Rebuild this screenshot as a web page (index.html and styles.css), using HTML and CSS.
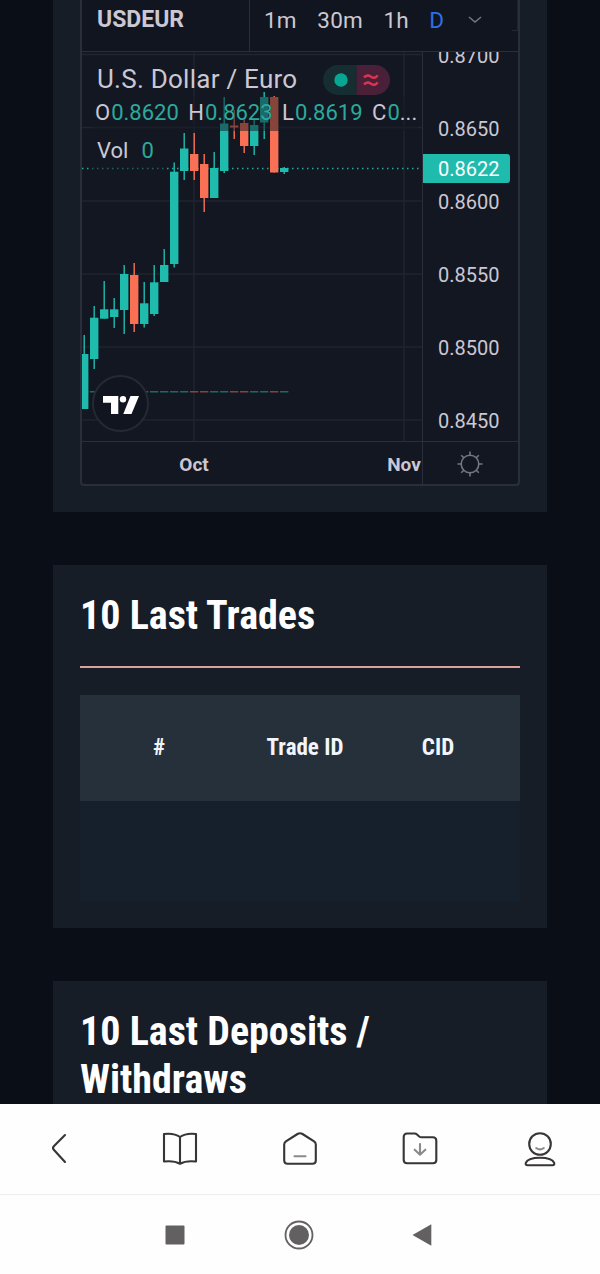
FILE: index.html
```html
<!DOCTYPE html>
<html lang="en">
<head>
    <meta charset="UTF-8">
    <meta name="viewport" content="width=device-width, initial-scale=1.0">
    <title>USDEUR</title>
    <link rel="stylesheet" href="styles.css">
</head>
<body>
    <main class="page">
        <section class="card chart-card">
            <div class="widget">
                <div class="toolbar">
                    <div class="symbol">USDEUR</div>
                    <div class="intervals">
                        <span class="interval">1m</span>
                        <span class="interval">30m</span>
                        <span class="interval">1h</span>
                        <span class="interval active">D</span>
                        <svg class="chevron" width="14" height="8" viewBox="0 0 14 8"><path d="M1 1l6 5 6-5"/></svg>
                    </div>
                    <span class="tool-edge"></span>
                </div>
                <div class="chart">
                    <div class="plot">
                        <svg id="candles" class="candles" width="341" height="389" viewBox="82 52 341 389"></svg>
                        <div class="legend">
                            <div class="legend-title">
                                <span class="pair">U.S. Dollar / Euro</span>
                                <span class="status">
                                    <svg width="67" height="30" viewBox="0 0 67 30">
                                        <path class="pill-open" d="M33.500 0H15a15 15 0 0 0 0 30h18.500z"/>
                                        <path class="pill-delay" d="M33.500 0H52a15 15 0 0 1 0 30H33.500z"/>
                                        <circle class="dot" cx="18" cy="15" r="6.700"/>
                                        <path class="wave" d="M41 12.500c2-2.500 4.500-2.500 7-.8s5 1.500 6.500-1.500M41 19.500c2-2.500 4.500-2.500 7-.8s5 1.500 6.500-1.500"/>
                                    </svg>
                                </span>
                            </div>
                            <div class="ohlc"><span class="k">O</span><span class="v">0.8620</span><span class="k">H</span><span class="v">0.8623</span><span class="k">L</span><span class="v">0.8619</span><span class="k">C</span><span class="v last">0<i>...</i></span></div>
                            <div class="volume"><span>Vol</span><span class="v">0</span></div>
                        </div>
                        <div class="tv-logo">
                            <svg width="37" height="18" viewBox="0 0 37 18">
                                <path d="M0 0h15.300v18H8V6.700H0z"/>
                                <circle cx="20" cy="3.200" r="3.200"/>
                                <path d="M27.500 0H36l-7.500 18h-8.200z"/>
                            </svg>
                        </div>
                    </div>
                    <div class="price-axis">
                        <span>0.8700</span>
                        <span>0.8650</span>
                        <span>0.8600</span>
                        <span>0.8550</span>
                        <span>0.8500</span>
                        <span>0.8450</span>
                        <div class="price-tag">0.8622</div>
                    </div>
                    <div class="time-axis">
                        <span>Oct</span>
                        <span>Nov</span>
                    </div>
                    <div class="axis-settings">
                        <svg width="26" height="26" viewBox="0 0 26 26">
                            <circle cx="13" cy="13" r="8.800"/>
                            <path d="M13 .5v3.700M13 21.800v3.700M.5 13h3.700M21.800 13h3.700M4.200 4.200l2.600 2.600M19.200 19.200l2.600 2.600M21.800 4.200l-2.600 2.600M6.800 19.200l-2.600 2.600"/>
                        </svg>
                    </div>
                </div>
            </div>
        </section>

        <section class="card trades">
            <h2>10 Last Trades</h2>
            <table>
                <thead>
                    <tr><th class="col-num">#</th><th class="col-trade">Trade ID</th><th class="col-cid">CID</th><th></th></tr>
                </thead>
                <tbody>
                    <tr><td colspan="4"></td></tr>
                </tbody>
            </table>
        </section>

        <section class="card">
            <h2>10 Last Deposits / Withdraws</h2>
        </section>
    </main>

    <nav class="browser-bar">
        <svg width="40" height="40" viewBox="0 0 40 40"><path d="M25 6L13.800 17.200q-1.600 1.800 0 3.600L25 33"/></svg>
        <svg width="40" height="40" viewBox="0 0 40 40"><path d="M20 8C15 4.300 9.500 4.300 4 5v27.500c5.500-.6 11-.6 16 2.300 5-2.900 10.500-2.900 16-2.300V5c-5.500-.7-11-.7-16 3zM20 8v26.300"/></svg>
        <svg width="40" height="40" viewBox="0 0 40 40"><path d="M4.200 15.500q0-2 1.700-3.100L17.500 5q2.500-1.500 5 0l11.600 7.400q1.700 1.100 1.700 3.100v16q0 3.300-3.300 3.300h-25q-3.300 0-3.300-3.300z"/><path class="faint" d="M14.500 27.300h11"/></svg>
        <svg width="40" height="40" viewBox="0 0 40 40"><path d="M3.700 8q0-3.500 3.500-3.500h7.300q1.500 0 2.500 1l2.200 2q1 .8 2.300.8h11.300q3.500 0 3.500 3.500V31q0 3.300-3.500 3.300H7.200q-3.500 0-3.500-3.300z"/><path class="faint" d="M20 15v10.500M14.700 20.700l5.300 5 5.300-5"/></svg>
        <svg width="40" height="40" viewBox="0 0 40 40"><circle cx="20" cy="15" r="10.800"/><path d="M7.500 36.200q-2.300 0-1.700-2.300C8.500 27 31.500 27 34.200 33.900q.6 2.300-1.700 2.300z"/><path class="faint" d="M16.200 19q3.800 2.800 7.600 0"/></svg>
    </nav>
    <nav class="system-bar">
        <svg width="30" height="30" viewBox="0 0 30 30"><rect x="5.500" y="5.500" width="19" height="19" rx="1"/></svg>
        <svg width="30" height="30" viewBox="0 0 30 30"><circle class="ring" cx="15" cy="15" r="13.500"/><circle cx="15" cy="15" r="10"/></svg>
        <svg width="30" height="30" viewBox="0 0 30 30"><path d="M23.300 4.300v21.500L4.500 15z"/></svg>
    </nav>

    <script>
        // x centre, high, body top, body bottom, low, direction
        const candles = [
            [84, 335, 354, 409, 409, 'up'],
            [94, 306, 317.7, 359, 369, 'up'],
            [104, 281, 309.3, 318.7, 318.7, 'up'],
            [114, 298, 309.3, 317, 328, 'up'],
            [124, 265, 274, 310, 334, 'up'],
            [134, 263, 275, 324, 332, 'down'],
            [144, 282, 303.3, 324, 327.5, 'up'],
            [154, 265, 282.3, 314, 316, 'up'],
            [164, 249, 265, 282, 282, 'up'],
            [174, 162.5, 171.7, 264, 267.5, 'up'],
            [184, 133, 148.5, 171, 180, 'up'],
            [194, 133, 154, 171, 180, 'down'],
            [204, 154, 164, 198, 212, 'down'],
            [214, 152, 168, 198, 198, 'up'],
            [224, 97, 123.5, 171, 173, 'up'],
            [234, 110, 125.5, 127.5, 139, 'down'],
            [244, 118, 123, 146, 153, 'down'],
            [254, 120, 125, 146, 155, 'up'],
            [264, 92, 97, 122.5, 139, 'up'],
            [274, 96, 97, 172.5, 172.5, 'down'],
            [284, 167, 168, 172, 174, 'up']
        ];

        let out = '<path class="grid" d="M81 54.500h341M81 127.500h341M81 201h341M81 274h341M81 347h341M81 420h341M194 52v389M404 52v389"/>';
        out += '<path class="last-line" d="M82 168.500h340"/>';
        candles.forEach(([x, high, top, bottom, low, dir]) => {
            out += `<rect class="vol ${dir}" x="${x - 4}" y="391" width="8.400" height="1.500"/>`;
            out += `<rect class="${dir}" x="${x - 0.5}" y="${high}" width="1.400" height="${low - high}"/>`;
            out += `<rect class="${dir}" x="${x - 4}" y="${top}" width="8.400" height="${bottom - top}"/>`;
        });
        document.getElementById('candles').innerHTML = out;
    </script>
</body>
</html>
```
FILE: styles.css
```css
* {
    box-sizing: border-box;
}

body {
    margin: 0;
    height: 1274px;
    display: flex;
    flex-direction: column;
    overflow: hidden;
    background: #0a0e17;
    font-family: Roboto, "Liberation Sans", sans-serif;
}

.page {
    height: 1104px;
    overflow: hidden;
    padding: 0 53px;
    display: flex;
    flex-direction: column;
    gap: 53.400px;
}

.card {
    flex: none;
    background: #161d27;
    padding: 27px 27px 26px;
}

.chart-card {
    padding-top: 0;
}

.widget {
    height: 486px;
    border: 2px solid #2a2e3b;
    border-top: 0;
    border-radius: 0 0 4px 4px;
    background: #131722;
    color: #cbc7d3;
    overflow: hidden;
}

.toolbar {
    height: 52px;
    display: flex;
    position: relative;
    border-bottom: 1px solid #2a2e3b;
    background: #11151f;
    font-size: 22.500px;
    line-height: 40px;
}

.symbol {
    width: 168px;
    padding-left: 15px;
    border-right: 1px solid #2a2e3b;
    font-size: 23px;
    font-weight: 700;
}

.intervals {
    display: flex;
    align-items: flex-start;
    padding-left: 14px;
    gap: 20.500px;
    letter-spacing: 0.200px;
}

.active {
    color: #2e6fe6;
}

.chevron {
    margin: 16px 0 0 3px;
    fill: none;
    stroke: #747783;
    stroke-width: 1.500;
}

.tool-edge {
    margin-left: auto;
    width: 6px;
    height: 31px;
    border-right: 1px solid #1f232e;
    border-bottom: 1px solid #242833;
}

.chart {
    display: grid;
    grid-template-columns: 340px 1fr;
    grid-template-rows: 389px 43px;
}

.plot {
    position: relative;
    overflow: hidden;
}

.candles {
    display: block;
}

.grid {
    fill: none;
    stroke: #20242f;
    stroke-width: 1.500;
}

.last-line {
    stroke: #25aa9e;
    stroke-width: 1.500;
    stroke-dasharray: 1.500 3.500;
}

.up {
    fill: #1fbcae;
}

.down {
    fill: #fa7055;
}

.vol {
    opacity: 0.500;
}

.legend {
    position: absolute;
    top: 10px;
    left: 10px;
    width: 326px;
}

.legend-title {
    display: flex;
    align-items: center;
    height: 35px;
    padding-left: 5px;
    font-size: 26px;
    letter-spacing: 0.250px;
}

.pair {
    width: 226px;
    line-height: 35px;
}

.status svg {
    display: block;
}

.pill-open {
    fill: #162d32;
}

.pill-delay {
    fill: #4a2038;
}

.dot {
    fill: #08a794;
}

.wave {
    fill: none;
    stroke: #dc3550;
    stroke-width: 2.400;
}

.ohlc {
    display: flex;
    height: 34px;
    padding-left: 3px;
    line-height: 31px;
    font-size: 22px;
    background: rgba(19, 23, 34, 0.5);
    white-space: nowrap;
}

.k {
    margin-right: 1px;
}

.v {
    color: #2ca99c;
}

.ohlc .v {
    margin-right: 9.500px;
}

.ohlc .last {
    margin-right: 0;
}

.last i {
    color: #cbc7d3;
    font-style: normal;
}

.volume {
    display: flex;
    gap: 13px;
    width: 74px;
    height: 40px;
    padding-left: 5px;
    line-height: 39px;
    font-size: 22px;
    background: rgba(19, 23, 34, 0.5);
}

.tv-logo {
    position: absolute;
    left: 10px;
    top: 323px;
    width: 57px;
    height: 57px;
    display: flex;
    align-items: center;
    justify-content: center;
    border: 2px solid #252934;
    border-radius: 50%;
    background: #11151f;
    fill: #fff;
}

.tv-logo svg {
    margin: 2px 0 0 2px;
}

.price-axis {
    position: relative;
    overflow: hidden;
    border-left: 1px solid #2a2e3b;
    font-size: 20px;
}

.price-axis span {
    display: block;
    height: 73px;
    padding-left: 15px;
    line-height: 73px;
}

.price-axis span:first-child {
    margin-top: -32px;
}

.price-tag {
    position: absolute;
    top: 102px;
    left: -1px;
    width: 88px;
    height: 29px;
    padding-left: 16px;
    line-height: 31px;
    border-radius: 0 3px 3px 0;
    background: #1fbcae;
    color: #fff;
}

.time-axis {
    display: flex;
    overflow: hidden;
    border-top: 1px solid #2a2e3b;
    padding-left: 7px;
    font-size: 19px;
    font-weight: 700;
    line-height: 45px;
}

.time-axis span {
    flex: none;
    width: 210px;
    text-align: center;
}

.axis-settings {
    display: flex;
    align-items: center;
    justify-content: center;
    padding: 1px 2px 0 0;
    border-top: 1px solid #2a2e3b;
    border-left: 1px solid #2a2e3b;
    fill: none;
    stroke: #747783;
    stroke-width: 1.600;
}

h2 {
    margin: 0;
    color: #fff;
    font-family: "Roboto Condensed", Roboto, sans-serif;
    font-stretch: 75%;
    font-size: 40px;
    font-weight: 700;
    line-height: 47.500px;
}

.trades h2 {
    padding-bottom: 26px;
    margin-bottom: 27px;
    border-bottom: 2px solid #d9a29d;
}

table {
    width: 100%;
    table-layout: fixed;
    border-collapse: collapse;
}

th {
    height: 106px;
    padding: 0;
    background: #25303b;
    color: #f2f5fc;
    font-family: "Roboto Condensed", Roboto, sans-serif;
    font-stretch: 75%;
    font-size: 23px;
    font-weight: 700;
}

td {
    height: 101px;
    padding: 0;
    background: #15202c;
}

.col-num {
    width: 158px;
}

.col-trade {
    width: 134px;
}

.col-cid {
    width: 132px;
}

.browser-bar {
    height: 91px;
    display: grid;
    grid-template-columns: repeat(5, 1fr);
    place-items: center;
    background: #fefefe;
    border-bottom: 1px solid #ededed;
    fill: none;
    stroke: #373536;
    stroke-width: 2.100;
    stroke-linecap: round;
    stroke-linejoin: round;
}

.faint {
    stroke: #8c898a;
}

.system-bar {
    flex: 1;
    display: flex;
    align-items: center;
    justify-content: center;
    gap: 94px;
    padding: 0 2px 0 0;
    background: #fefefe;
    fill: #626061;
}

.ring {
    fill: none;
    stroke: #626061;
    stroke-width: 1.800;
}
```
